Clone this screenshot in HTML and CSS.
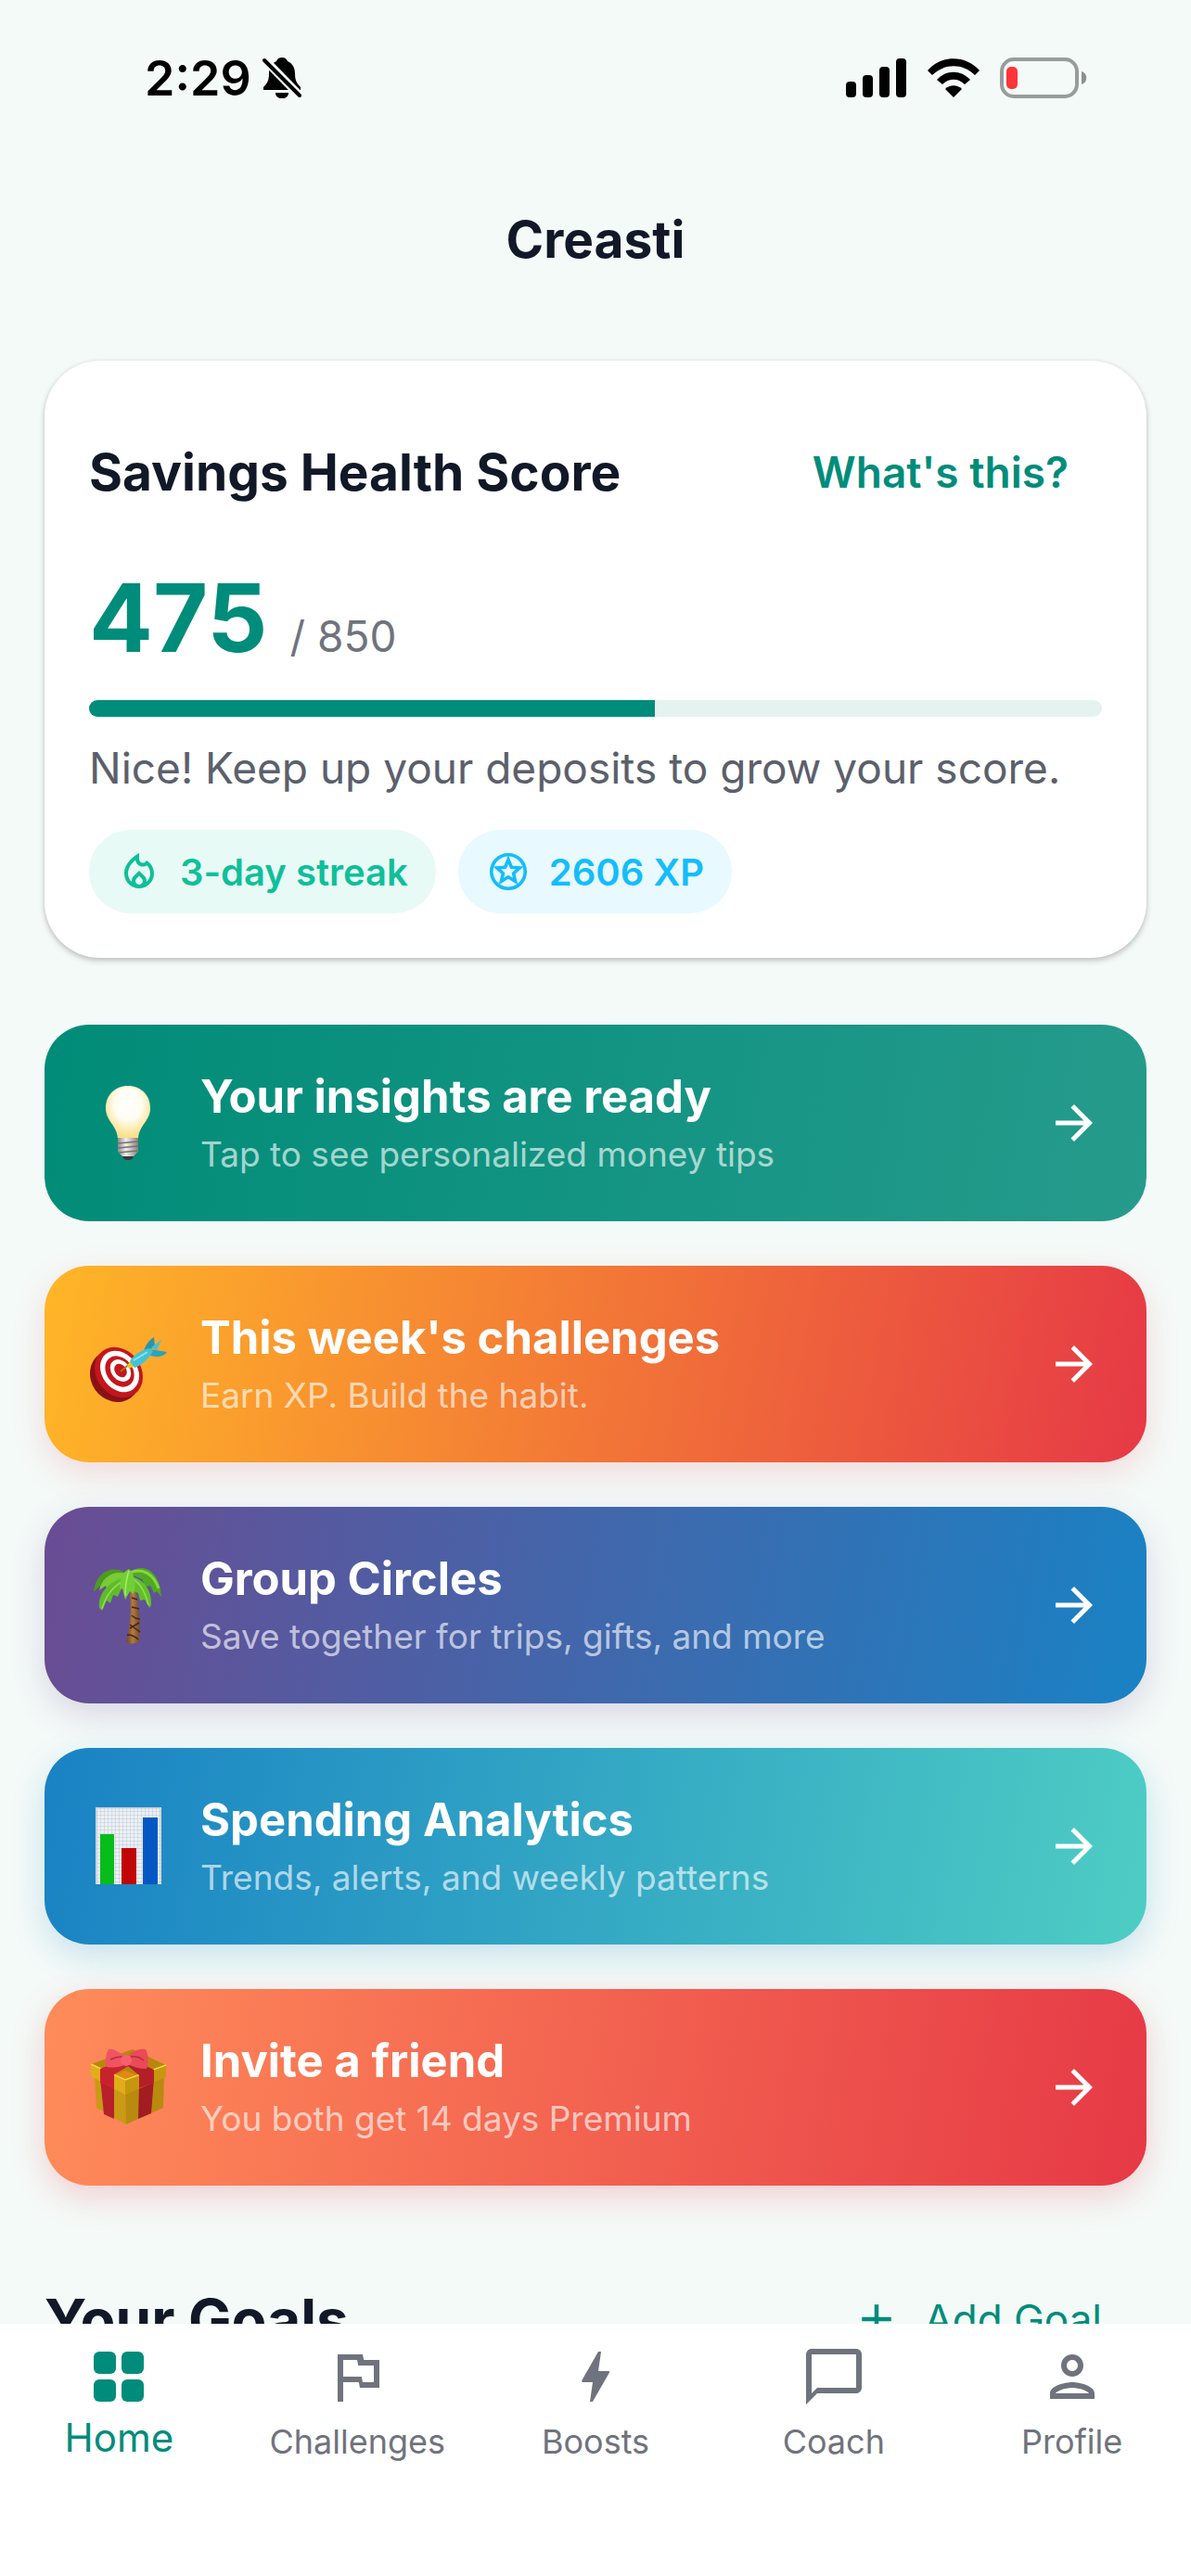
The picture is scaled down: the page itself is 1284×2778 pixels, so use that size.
FILE: index.html
```html
<!DOCTYPE html>
<html lang="en">
<head>
    <meta charset="UTF-8">
    <meta name="viewport" content="width=device-width, initial-scale=1.0">
    <title>Creasti</title>
    <link rel="stylesheet" href="styles.css">
</head>
<body>

<div class="app">
    <div class="status-bar">
        <div class="status-left">
            <span class="status-time">2:29</span>
            <svg class="status-bell" viewBox="0 0 42 46" aria-hidden="true">
                <path d="M21 1c-3 0-5 1.500-6 4-5 2-8 7-8 13 0 8-2 11-6 15v3h40v-3c-4-4-6-7-6-15 0-6-3-11-8-13-1-2.500-3-4-6-4z"/>
                <path d="M14 39h14c0 4-3 6-7 6s-7-2-7-6z"/>
                <path d="M1 2l40 41" class="bell-gap"/>
                <path d="M2 4l38 38" class="bell-slash"/>
            </svg>
        </div>
        <div class="status-right">
            <svg class="status-signal" viewBox="0 0 66 42" aria-hidden="true">
                <rect x="0" y="25" width="11" height="17" rx="4"/>
                <rect x="18" y="18" width="11" height="24" rx="4"/>
                <rect x="36" y="9" width="11" height="33" rx="4"/>
                <rect x="54" y="0" width="11" height="42" rx="4"/>
            </svg>
            <svg class="status-wifi" viewBox="0 0 58 42" aria-hidden="true">
                <path d="M1 13C16-4 42-4 57 13l-5 5C39 5 19 5 6 18z"/>
                <path d="M11 23c10-11 26-11 36 0l-6 5c-7-7-17-7-24 0z"/>
                <path d="M20 33c5-5 13-5 18 0l-9 9z"/>
            </svg>
            <svg class="status-battery" viewBox="0 0 94 44" aria-hidden="true">
                <rect x="2" y="2" width="81" height="40" rx="13" class="battery-case"/>
                <rect x="7" y="10" width="12" height="24" rx="5" class="battery-level"/>
                <path d="M88 15c7 2 7 12 0 14z" class="battery-cap"/>
            </svg>
        </div>
    </div>

    <header class="header">
        <h1>Creasti</h1>
    </header>

    <main class="content">
        <section class="score-card">
            <div class="score-head">
                <h2>Savings Health Score</h2>
                <button type="button" class="text-button">What's this?</button>
            </div>
            <div class="score-value">
                <span class="score-number">475</span>
                <span class="score-total">/ 850</span>
            </div>
            <div class="progress">
                <div class="progress-fill" style="width: 55.9%"></div>
            </div>
            <p class="score-text">Nice! Keep up your deposits to grow your score.</p>
            <div class="chips">
                <span class="chip chip-streak">
                    <svg viewBox="0 0 24 24" aria-hidden="true"><path d="M16 6l-.44.55c-.42.52-.98.75-1.54.75C13 7.300 12 6.520 12 5.300V2S4 6 4 13c0 4.420 3.580 8 8 8s8-3.580 8-8c0-2.960-1.610-5.620-4-7zm-4 13c-1.100 0-2-.87-2-1.940 0-.51.2-.99.58-1.360L12 14.300l1.430 1.400c.37.37.57.85.57 1.360 0 1.070-.9 1.940-2 1.940zm3.960-1.500c.04-.36.22-1.890-1.130-3.220L12 11.500l-2.830 2.780c-1.360 1.340-1.170 2.880-1.130 3.220C6.790 16.400 6 14.790 6 13c0-3.160 2.130-5.650 4.030-7.250.23 1.990 1.930 3.550 3.990 3.550.78 0 1.540-.23 2.180-.66C17.340 9.780 18 11.350 18 13c0 1.790-.79 3.400-2.040 4.500z"/></svg>
                    3-day streak
                </span>
                <span class="chip chip-xp">
                    <svg viewBox="0 0 24 24" aria-hidden="true">
                        <circle cx="12" cy="12" r="9.1" class="xp-ring"/>
                        <path d="M12 5.500l1.700 4.100 4.400.4-3.300 2.900 1 4.300-3.800-2.300-3.800 2.300 1-4.300L5.900 10l4.400-.4z" class="xp-star"/>
                    </svg>
                    2606 XP
                </span>
            </div>
        </section>

        <section class="banners">
            <a href="#insights" class="banner banner-insights">
                <svg class="banner-icon" viewBox="0 0 84 84" aria-hidden="true">
                    <defs>
                        <radialGradient id="glass" cx=".5" cy=".35" r=".6">
                            <stop offset="0" stop-color="#fff"/>
                            <stop offset=".5" stop-color="#fffdf0"/>
                            <stop offset="1" stop-color="#fbe08c"/>
                        </radialGradient>
                        <linearGradient id="screw">
                            <stop offset="0" stop-color="#8c8a88"/>
                            <stop offset=".4" stop-color="#f1efed"/>
                            <stop offset="1" stop-color="#85807c"/>
                        </linearGradient>
                    </defs>
                    <path d="M42 2C28 2 18 12 18 26c0 14 12 18 13 33h22c1-15 13-19 13-33C66 12 56 2 42 2z" fill="url(#glass)"/>
                    <path d="M31 58h22v15l-6 6H37l-6-6z" fill="url(#screw)"/>
                    <path d="M31 64l22-2M31 69l22-2M32 74l20-2" stroke="#77716d" stroke-width="1.5"/>
                    <path d="M36 78h12c-1 3-3 4-6 4s-5-1-6-4z" fill="#3a3938"/>
                </svg>
                <span class="banner-body">
                    <span class="banner-title">Your insights are ready</span>
                    <span class="banner-sub">Tap to see personalized money tips</span>
                </span>
                <svg class="banner-arrow" viewBox="0 0 24 24" aria-hidden="true"><path d="M12 4l-1.410 1.410L16.170 11H4v2h12.170l-5.580 5.590L12 20l8-8z"/></svg>
            </a>

            <a href="#challenges" class="banner banner-challenges">
                <svg class="banner-icon" viewBox="0 0 84 84" aria-hidden="true">
                    <ellipse cx="28" cy="55" rx="26" ry="29" transform="rotate(-35 28 55)" fill="#8a1214"/>
                    <ellipse cx="32" cy="51" rx="24" ry="29" transform="rotate(-38 32 51)" fill="#c4161c"/>
                    <ellipse cx="33" cy="50" rx="19" ry="24" transform="rotate(-38 33 50)" fill="#fff"/>
                    <ellipse cx="33" cy="50" rx="14" ry="18" transform="rotate(-38 33 50)" fill="#c4161c"/>
                    <ellipse cx="34" cy="49" rx="10" ry="13" transform="rotate(-38 34 49)" fill="#fff"/>
                    <ellipse cx="34" cy="49" rx="6" ry="8" transform="rotate(-38 34 49)" fill="#c4161c"/>
                    <path d="M34 50l12-10" stroke="#9a7a14" stroke-width="2"/>
                    <path d="M41 44l3-5 5 5-6 3z" fill="#e9c71c"/>
                    <path d="M59 28c2-7 6-12 11-15l1 11z" fill="#2596ae"/>
                    <path d="M67 24l11-8-5 11z" fill="#46c0d4"/>
                    <path d="M66 26l18 3c-3 5-12 7-19 3z" fill="#2ba3bb"/>
                    <path d="M44 39c3-6 12-12 21-14l4 3c-5 8-11 15-20 18z" fill="#45c1d6"/>
                    <path d="M48 38l15-9" stroke="#8be4ef" stroke-width="2"/>
                </svg>
                <span class="banner-body">
                    <span class="banner-title">This week's challenges</span>
                    <span class="banner-sub">Earn XP. Build the habit.</span>
                </span>
                <svg class="banner-arrow" viewBox="0 0 24 24" aria-hidden="true"><path d="M12 4l-1.410 1.410L16.170 11H4v2h12.170l-5.580 5.590L12 20l8-8z"/></svg>
            </a>

            <a href="#circles" class="banner banner-circles">
                <svg class="banner-icon" viewBox="0 0 84 84" aria-hidden="true">
                    <defs>
                        <linearGradient id="trunk">
                            <stop offset="0" stop-color="#6e4523"/>
                            <stop offset=".5" stop-color="#b07a42"/>
                            <stop offset="1" stop-color="#7a4c26"/>
                        </linearGradient>
                    </defs>
                    <path d="M43 22h6c5 19 6 40 5 59-3 3-11 3-14 1 5-20 6-40 3-60z" fill="url(#trunk)"/>
                    <path d="M46 34l6 2M46 44l8 2M46 53c3 3 6 4 9 4M44 63l11 8M41 74c5 0 9 2 12 5M54 61l-10 6" stroke="#41270f" stroke-width="1.500" fill="none"/>
                    <path d="M44 10C30-2 8 2 5 28c7-8 12-11 17-13 6-2 14-2 22-5z" fill="#4c9a22"/>
                    <path d="M42 9C28 3 14 11 11 26l7-5 1 5 8-7 1 4 8-7z" fill="#79cc35"/>
                    <path d="M42 12C24 14 9 28 11 45l3 3 5-11 4 3 3-9 5 2 4-9 4 1z" fill="#5fbb2b"/>
                    <path d="M40 14C28 20 18 31 14 46" stroke="#95df4c" stroke-width="1.500" fill="none"/>
                    <path d="M43 8C54-4 76 1 78 33l-5-6-3 2-4-8-5 1-4-8z" fill="#4fa924"/>
                    <path d="M44 7c14-6 26 2 31 17" stroke="#86d63f" stroke-width="3" fill="none"/>
                    <path d="M44 11c15 2 24 15 23 31l-2 3-5-9-5 1-2-8-5-2z" fill="#62bd2b"/>
                    <path d="M46 13c9 5 15 16 18 29" stroke="#94de4b" stroke-width="1.500" fill="none"/>
                    <path d="M43 3c-8 4-10 12-10 22l3-1 3 12 5-9 4 3c3-10 2-20-5-27z" fill="#71cf36"/>
                    <path d="M43 5c-3 9-4 18-4 27" stroke="#a7ec60" stroke-width="1.500" fill="none"/>
                </svg>
                <span class="banner-body">
                    <span class="banner-title">Group Circles</span>
                    <span class="banner-sub">Save together for trips, gifts, and more</span>
                </span>
                <svg class="banner-arrow" viewBox="0 0 24 24" aria-hidden="true"><path d="M12 4l-1.410 1.410L16.170 11H4v2h12.170l-5.580 5.590L12 20l8-8z"/></svg>
            </a>

            <a href="#analytics" class="banner banner-analytics">
                <svg class="banner-icon" viewBox="0 0 84 84" aria-hidden="true">
                    <defs>
                        <pattern id="graph" width="4" height="4" patternUnits="userSpaceOnUse">
                            <rect width="4" height="4" fill="#eef0f3"/>
                            <path d="M0 0h4M0 0v4" stroke="#b9cbdc" stroke-width="1"/>
                        </pattern>
                    </defs>
                    <rect x="7" y="0" width="71" height="83" fill="url(#graph)"/>
                    <path d="M8 83V1h69v82" fill="none" stroke="#bfc6cc"/>
                    <rect x="12" y="29" width="15" height="54" fill="#06bd1a"/>
                    <rect x="35" y="44" width="16" height="39" fill="#c00607"/>
                    <rect x="58" y="11" width="16" height="72" fill="#0558c4"/>
                </svg>
                <span class="banner-body">
                    <span class="banner-title">Spending Analytics</span>
                    <span class="banner-sub">Trends, alerts, and weekly patterns</span>
                </span>
                <svg class="banner-arrow" viewBox="0 0 24 24" aria-hidden="true"><path d="M12 4l-1.410 1.410L16.170 11H4v2h12.170l-5.580 5.590L12 20l8-8z"/></svg>
            </a>

            <a href="#invite" class="banner banner-invite">
                <svg class="banner-icon" viewBox="0 0 84 84" aria-hidden="true">
                    <!-- box -->
                    <path d="M6 30l33 16 1 36L8 64z" fill="#c99a14"/>
                    <path d="M39 46l42-16-1 34-40 18z" fill="#b98a10"/>
                    <path d="M12 32l15 7v37l-11-5z" fill="#b8202a"/>
                    <path d="M54 38l16-6-3 38-14 6z" fill="#a31c22"/>
                    <!-- lid -->
                    <path d="M2 17l37 17v16L2 30z" fill="#dfae18"/>
                    <path d="M39 34l44-16v13L39 50z" fill="#c6960f"/>
                    <path d="M2 17L47 1l36 17-44 17z" fill="#b9860f"/>
                    <path d="M27 29l12-5 15 6-15 5z" fill="#e08a12"/>
                    <path d="M2 17l37 17 44-16" fill="none" stroke="#f6d544" stroke-width="1.500"/>
                    <path d="M12 22l25-10 11 4-21 12v16l-15-7z" fill="#c8232d"/>
                    <path d="M37 15l7-4 26 12v14l-16 6V29z" fill="#b31f28"/>
                    <!-- bow -->
                    <path d="M39 9C31 3 26 0 21 1c-3 5-4 13-2 19 7 1 14 1 20-3z" fill="#f05462"/>
                    <path d="M41 9c7-7 14-9 20-8 3 6 4 14 1 21-8 0-14-2-21-5z" fill="#ea4a58"/>
                    <path d="M36 9c-6 0-9 1-13 3M45 9c5-1 9 0 14 4" stroke="#b92b3b" stroke-width="1.500" fill="none"/>
                    <ellipse cx="40" cy="13" rx="6" ry="6" fill="#f4606d"/>
                </svg>
                <span class="banner-body">
                    <span class="banner-title">Invite a friend</span>
                    <span class="banner-sub">You both get 14 days Premium</span>
                </span>
                <svg class="banner-arrow" viewBox="0 0 24 24" aria-hidden="true"><path d="M12 4l-1.410 1.410L16.170 11H4v2h12.170l-5.580 5.590L12 20l8-8z"/></svg>
            </a>
        </section>

        <section class="goals-head">
            <h2>Your Goals</h2>
            <button type="button" class="add-goal">
                <svg viewBox="0 0 24 24" aria-hidden="true"><path d="M19 13h-6v6h-2v-6H5v-2h6V5h2v6h6z"/></svg>
                Add Goal
            </button>
        </section>
    </main>

    <nav class="tab-bar">
        <a href="#home" class="tab active">
            <svg viewBox="0 0 24 24" aria-hidden="true"><rect x="3" y="3" width="8" height="8" rx="2"/><rect x="13" y="3" width="8" height="8" rx="2"/><rect x="3" y="13" width="8" height="8" rx="2"/><rect x="13" y="13" width="8" height="8" rx="2"/></svg>
            <span>Home</span>
        </a>
        <a href="#challenges" class="tab">
            <svg viewBox="0 0 24 24" aria-hidden="true"><path d="M14.400 6L14 4H5v17h2v-7h5.600l.4 2h7V6h-5.600zm3.600 8h-4l-.4-2H7V6h5l.4 2H18v6z"/></svg>
            <span>Challenges</span>
        </a>
        <a href="#boosts" class="tab">
            <svg viewBox="0 0 24 24" aria-hidden="true"><path d="M11 21h-1l1-7H7.500c-.88 0-.33-.75-.31-.78C8.480 10.940 10.420 7.540 13.010 3h1l-1 7h3.510c.4 0 .62.19.4.66C12.970 17.550 11 21 11 21z"/></svg>
            <span>Boosts</span>
        </a>
        <a href="#coach" class="tab">
            <svg viewBox="0 0 24 24" aria-hidden="true"><path d="M20 2H4c-1.100 0-2 .9-2 2v18l4-4h14c1.100 0 2-.9 2-2V4c0-1.100-.9-2-2-2zm0 14H6l-2 2V4h16v12z"/></svg>
            <span>Coach</span>
        </a>
        <a href="#profile" class="tab">
            <svg viewBox="0 0 24 24" aria-hidden="true"><path d="M12 6c1.100 0 2 .9 2 2s-.9 2-2 2-2-.9-2-2 .9-2 2-2m0 10c2.700 0 5.800 1.290 6 2H6c.23-.72 3.310-2 6-2m0-12C9.790 4 8 5.790 8 8s1.790 4 4 4 4-1.790 4-4-1.790-4-4-4zm0 10c-2.670 0-8 1.340-8 4v2h16v-2c0-2.660-5.330-4-8-4z"/></svg>
            <span>Profile</span>
        </a>
    </nav>
</div>

</body>
</html>
```
FILE: styles.css
```css
* {
    box-sizing: border-box;
}

body {
    margin: 0;
    font-family: Inter, "Liberation Sans", sans-serif;
    color: #111827;
    background-color: #f4faf8;
}

h1, h2, p {
    margin: 0;
}

a {
    text-decoration: none;
}

button {
    border: 0;
    background: none;
    font-family: inherit;
    color: #008c7a;
    cursor: pointer;
}

svg {
    flex-shrink: 0;
    fill: currentColor;
}

.app {
    display: flex;
    flex-direction: column;
    height: 100vh;
}

/* Status bar */
.status-bar {
    display: flex;
    flex-shrink: 0;
    justify-content: space-between;
    align-items: center;
    height: 168px;
    padding: 0 112px 0 156px;
    color: #000;
}

.status-left {
    display: flex;
    align-items: center;
    gap: 12px;
}

.status-right {
    display: flex;
    align-items: center;
    gap: 21px;
}

.status-time {
    font-size: 52px;
    font-weight: 600;
}

.status-bell {
    width: 42px;
    height: 46px;
}

.bell-gap {
    stroke: #f4faf8;
    stroke-width: 9;
}

.bell-slash {
    stroke: #000;
    stroke-width: 4;
    stroke-linecap: round;
}

.status-signal {
    width: 66px;
    height: 42px;
}

.status-wifi {
    width: 58px;
    height: 42px;
}

.status-battery {
    width: 94px;
    height: 44px;
}

.battery-case {
    fill: none;
    stroke: #979d9b;
    stroke-width: 4;
}

.battery-level {
    fill: #ff3437;
}

.battery-cap {
    fill: #8b908f;
}

.header {
    display: flex;
    flex-shrink: 0;
    justify-content: center;
    align-items: center;
    height: 180px;
}

.header h1 {
    font-size: 55px;
    font-weight: 700;
}

.content {
    flex: 1;
    min-height: 0;
    overflow: hidden;
    padding: 41px 48px 0;
}

/* Score card */
.score-card {
    padding: 48px;
    border-radius: 60px;
    background-color: #fff;
    box-shadow: 0 3px 6px rgba(0, 0, 0, 0.22), 0 0 4px rgba(0, 0, 0, 0.06);
}

.score-head {
    display: flex;
    justify-content: space-between;
    align-items: center;
    height: 144px;
}

.score-head h2 {
    font-size: 55px;
    font-weight: 700;
}

.text-button {
    padding: 24px 36px;
    font-size: 46px;
    font-weight: 600;
}

.score-value {
    display: flex;
    align-items: baseline;
    gap: 24px;
    margin-top: 24px;
}

.score-number {
    font-size: 102px;
    font-weight: 700;
    line-height: 122px;
    color: #008c7a;
}

.score-total {
    font-size: 46px;
    line-height: 54px;
    color: #6f737d;
}

.progress {
    height: 18px;
    margin-top: 28px;
    border-radius: 9px;
    background-color: #e4f3f0;
    overflow: hidden;
}

.progress-fill {
    height: 100%;
    background-color: #008c7a;
}

.score-text {
    margin-top: 28px;
    font-size: 46px;
    line-height: 54px;
    color: #5b606b;
}

.chips {
    display: flex;
    gap: 24px;
    margin-top: 40px;
}

.chip {
    display: flex;
    align-items: center;
    gap: 20px;
    height: 90px;
    padding: 0 30px;
    border-radius: 45px;
    font-size: 40px;
    font-weight: 600;
}

.chip svg {
    width: 48px;
    height: 48px;
}

.chip-streak {
    color: #0fbf9a;
    background-color: #e8faf6;
}

.chip-xp {
    color: #14bdfb;
    background-color: #e8f9ff;
}

.xp-ring {
    fill: none;
    stroke: currentColor;
    stroke-width: 1.8;
}

.xp-star {
    fill: none;
    stroke: currentColor;
    stroke-width: 1.8;
}

/* Banners */
.banners {
    display: flex;
    flex-direction: column;
    gap: 48px;
    margin-top: 72px;
}

.banner {
    display: flex;
    align-items: center;
    gap: 36px;
    padding: 48px;
    border-radius: 48px;
    color: #fff;
}

.banner-icon {
    width: 84px;
    height: 84px;
}

.banner-body {
    display: flex;
    flex: 1;
    flex-direction: column;
    gap: 8px;
}

.banner-title {
    font-size: 49px;
    font-weight: 700;
    line-height: 60px;
}

.banner-sub {
    font-size: 37px;
    font-weight: 400;
    line-height: 48px;
    color: rgba(255, 255, 255, 0.65);
}

.banner-arrow {
    width: 60px;
    height: 60px;
}

.banner-insights {
    background: linear-gradient(100deg, #008c78, #269b8c);
}

.banner-challenges {
    background: linear-gradient(100deg, #ffb627, #e63946);
    box-shadow: 0 12px 36px rgba(230, 57, 70, 0.16);
}

.banner-circles {
    background: linear-gradient(100deg, #6a4c93, #1982c4);
    box-shadow: 0 12px 36px rgba(106, 76, 147, 0.2);
}

.banner-analytics {
    background: linear-gradient(100deg, #1982c4, #4ecdc4);
    box-shadow: 0 12px 36px rgba(25, 130, 196, 0.2);
}

.banner-invite {
    background: linear-gradient(100deg, #ff8c5a, #e63946);
    box-shadow: 0 12px 36px rgba(230, 57, 70, 0.22);
}

/* Goals */
.goals-head {
    display: flex;
    justify-content: space-between;
    align-items: center;
    height: 144px;
    margin-top: 72px;
}

.goals-head h2 {
    font-size: 62px;
    font-weight: 700;
}

.add-goal {
    display: flex;
    align-items: center;
    gap: 24px;
    padding: 24px 48px;
    font-size: 44px;
}

.add-goal svg {
    width: 54px;
    height: 54px;
}

/* Bottom tabs */
.tab-bar {
    display: grid;
    grid-template-columns: repeat(5, 1fr);
    flex-shrink: 0;
    height: 272px;
    padding-top: 21px;
    background-color: #fff;
}

.tab {
    display: flex;
    flex-direction: column;
    align-items: center;
    gap: 10px;
    font-size: 36px;
    line-height: 48px;
    color: #6f737d;
}

.tab svg {
    width: 72px;
    height: 72px;
}

.tab.active {
    font-size: 42px;
    line-height: 40px;
    color: #008c7a;
}
```
